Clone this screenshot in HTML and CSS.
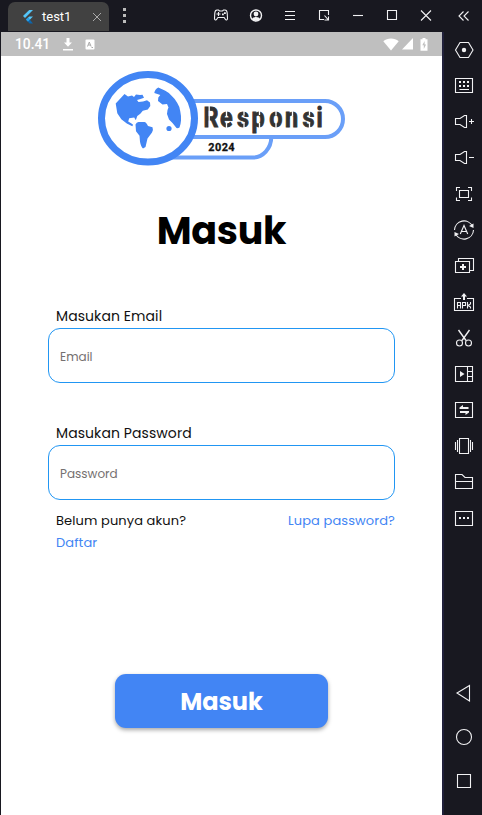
FILE: index.html
```html
<!DOCTYPE html>
<html lang="id">
<head>
<meta charset="utf-8">
<title>test1</title>
<link rel="stylesheet" href="styles.css">
</head>
<body>
<div class="window">
  <header class="titlebar">
    <div class="tab">
      <svg class="flutter" width="12" height="16" viewBox="0 0 12 16"><path d="M7.2 1H11L3 9 1 7z" fill="#54c5f8"/><path d="M7.2 7.5H11L7.8 10.8 6 12.5 4 10.6z" fill="#54c5f8"/><path d="M4 10.6l2-1.9 1.9 2L11 14.5H7.5z" fill="#0d66ad"/><path d="M4 10.6l2-1.9 1.9 1.9-1.9 1.9z" fill="#2aa5ec"/></svg>
      <span class="tab-name">test1</span>
      <svg class="tab-close" width="10" height="10" viewBox="0 0 10 10"><path d="M1 1l8 8M9 1L1 9"/></svg>
    </div>
    <svg class="kebab" width="3" height="16" viewBox="0 0 3 16"><path d="M0 0h3v3H0zM0 6h3v3H0zM0 12h3v3H0z"/></svg>
    <nav class="controls">
      <svg class="icon" viewBox="0 0 24 24"><path d="M7 6h1.500l1 1h3l1-1H15c1.500 0 2 1 2.200 3l.3 5.500c0 1.700-1.500 2-2.200.8l-1.200-1.800H7.900l-1.200 1.800c-.7 1.200-2.200.9-2.200-.8L4.800 9c.2-2 .7-3 2.200-3z"/><path d="M8.500 8v4M6.500 10h4"/><path class="solid" d="M12 9.500h1.800v1.800H12zM14 8.200h1.800V10H14z"/></svg>
      <svg class="icon" viewBox="0 0 24 24"><circle cx="12" cy="11.500" r="5.500" stroke-width="1.400"/><circle class="solid" cx="12" cy="10" r="2.400"/><path class="solid" d="M8 15.300c.5-3 7.500-3 8 0-2 2-6 2-8 0z"/></svg>
      <svg class="icon" viewBox="0 0 24 24"><path d="M7 7.500h10M7 11.500h10M7 15.500h10"/></svg>
      <svg class="icon" viewBox="0 0 24 24"><path d="M12 15.500H7.500v-9h9V11M12.500 11.500l3.500 4M16.500 12.500v3.500h-4"/></svg>
      <svg class="icon" viewBox="0 0 24 24"><path d="M7 11.500h10"/></svg>
      <svg class="icon" viewBox="0 0 24 24"><path d="M7.500 6.500h9v9h-9z"/></svg>
      <svg class="icon" viewBox="0 0 24 24"><path d="M7 6.500l10 10M17 6.500l-10 10"/></svg>
      <svg class="icon collapse" viewBox="0 0 24 24"><path d="M11.500 7.500L7 12l4.500 4.500M16.500 7.500L12 12l4.500 4.500"/></svg>
    </nav>
  </header>

  <main class="phone">
    <div class="statusbar">
      <span class="clock">10.41</span>
      <svg class="download" width="12" height="13" viewBox="0 0 12 13"><path d="M4.500 0h3v4.500H10L6 8.700 2 4.500h2.500zM1 11h10v1.500H1z"/></svg>
      <svg class="letter" width="10" height="11" viewBox="0 0 10 11"><rect x=".5" y=".5" width="9" height="10" rx="1"/><path d="M2.500 7.500L4.300 3l1.800 4.500M3.200 6h2.200M6.500 8.500h1.500" fill="none" stroke="#aaa"/></svg>
      <svg class="wifi" width="16" height="13" viewBox="0 0 16 13"><path d="M.3 3.200C4.500-.5 11.500-.5 15.700 3.200L8 12.500z"/></svg>
      <svg class="signal" width="12" height="12" viewBox="0 0 12 12"><path d="M11 0v11.500H0z"/></svg>
      <svg class="battery" width="8" height="13" viewBox="0 0 8 13"><path d="M2.500 0h3v1.200H7.500v11.600H.5V1.200h2z"/><path d="M4.600 3L2.300 7.300h1.500V11l2.300-4.500H4.600z" fill="#bfbfbf"/></svg>
    </div>

    <div class="page">
      <svg class="logo" width="270" height="112" viewBox="90 62 270 112" role="img">
        <path d="M170 137H271.300A18.500 20.500 0 0 1 252.500 157.600H170z" fill="#fff" stroke="#6a9ff8" stroke-width="4"/>
        <rect x="160" y="101" width="183" height="36" rx="18" fill="#fff" stroke="#6a9ff8" stroke-width="4"/>
        <text class="logo-name" transform="translate(203.500 127) scale(.85 1)" x="0 19.400 39.500 56.500 77.500 96 116.500 133" y="0">Responsi</text>
        <path class="stencil" d="M209.200 105v24M226.500 110v7M226.500 121v8M244 110v5.500M244 122v7M259.500 110v5M259.500 123v6M276 110v5.500M276 122v7M292.500 110v6M309.500 110v5.500M309.500 122v7"/>
        <text class="logo-year" transform="translate(208.300 150.700) scale(.95 1)" x="0" y="0" textLength="27.700" lengthAdjust="spacing">2024</text>
        <ellipse cx="148" cy="118.300" rx="46.500" ry="43.800" fill="#fff" stroke="#4285f4" stroke-width="7"/>
        <g fill="#4285f4">
          <path d="M115.700 103.500L124.500 94l3.500 2.500 4-1 2 1.500 2-2.500 4 .5 2.500-.3 1.500 3-3.500 1.300-3.500 1 1.500 2 4.500-.5 4-1.300 3 2.300.3 3.500-2.500 3.500-5 1.300-2.500 3-3 2.200-1.500 4.200-1.600-2.700-5 .8-1 3.200 3.300 2 1.600 1.300-.8 1.500-5.500-2.800-5.500-4.200-4-6z"/>
          <path d="M135.500 124.500q1-2.500 3-2.500h6q1.500 0 3.500 4l4.500 1.300q1 2.200-.5 5.200l-4.500 6-2 8.500-2.500 1.500q-2-1.500-3-6.800l-.5-6-3.500-4.500z"/>
          <path d="M154.300 93q.5-4 4-5.500l7 3.300q4 2 6.500 5.200 3.500 3 5.500 7 2.700 4 3 8.500 1 4.500.7 9-.3 4-1.500 7-1.500 1-3 .5l-4-5-3.500-3.500-2-5.500q0-4 1.500-6.500l-1.500-3.500-4.500.5-4.500-3.500.3-3.500 2-2.500z"/>
          <circle cx="169" cy="128.500" r="2.600"/>
        </g>
      </svg>

      <h1 class="title">Masuk</h1>

      <form class="form">
        <label class="label" for="email">Masukan Email</label>
        <input class="field email" id="email" type="text" placeholder="Email">
        <label class="label second" for="password">Masukan Password</label>
        <input class="field pass" id="password" type="password" placeholder="Password">
        <div class="links">
          <div class="register"><span class="ask">Belum punya akun?</span><a class="daftar">Daftar</a></div>
          <a class="forgot">Lupa password?</a>
        </div>
        <button class="submit" type="button">Masuk</button>
      </form>
    </div>
  </main>

  <aside class="sidebar">
    <div class="tools">
      <svg class="icon" viewBox="0 0 24 24"><path d="M3.500 12L8 4.500h8.500L21 12l-4.500 7.500H8z"/><circle class="solid" cx="12" cy="12" r="2.200"/></svg>
      <svg class="icon" viewBox="0 0 24 24"><path d="M3.500 4.500h17v14h-17zM7.500 15.500h9.500"/><path class="solid" d="M7 7h2v2H7zM11 7h2v2h-2zM15 7h2v2h-2zM7 11h2v2H7zM11 11h2v2h-2zM15 11h2v2h-2z"/></svg>
      <svg class="icon" viewBox="0 0 24 24"><path d="M3.500 8.500H8l4.500-3h2v12h-2L8 14.500H3.500zM17 11.500h5M19.500 9v5"/></svg>
      <svg class="icon" viewBox="0 0 24 24"><path d="M3.500 8.500H8l4.500-3h2v12h-2L8 14.500H3.500zM17 11.500h5"/></svg>
      <svg class="icon" viewBox="0 0 24 24"><path d="M4.500 9V5.500H8M16 5.500h3.500V9M4.500 15.500v3H8M16 18.500h3.500v-3M7.500 8.500h9v7h-9z"/></svg>
      <svg class="icon" viewBox="0 0 24 24"><path d="M2.500 12A9.500 9.500 0 0 1 20.500 8.200M21.500 12A9.500 9.500 0 0 1 3.500 15.800M8.300 16L12 7.500l3.700 8.500M9.500 13.500h5"/><path class="solid" d="M21.500 5.500v4.500l-4.500-2zM2.500 18.500V14L7 16z"/></svg>
      <svg class="icon" viewBox="0 0 24 24"><path d="M3.500 7.500h14v11h-14zM6.500 7V4.500h15v12H18"/><path d="M11 10v6M8 13h6" stroke-width="2"/></svg>
      <svg class="icon" viewBox="0 0 24 24"><path d="M9 8.500H2.500v12h19v-12H15"/><path d="M12 5v5" stroke-width="2"/><path class="solid" d="M9 6.500l3-3.500 3 3.500z"/><path d="M5.500 18.500v-6h3v6M5.500 15.500h3M10.500 18.500v-6h3v3h-3M15.500 12v6.500M18.500 12v2l-2.500 1.500 2.500 1.500v1.500"/></svg>
      <svg class="icon" viewBox="0 0 24 24"><path d="M6.500 4l7.500 10.500M17.500 4L10 14.500" stroke-width="1.400"/><circle cx="7.500" cy="17" r="3"/><circle cx="16.500" cy="17" r="3"/></svg>
      <svg class="icon" viewBox="0 0 24 24"><path d="M3.500 4.500h17v15h-17zM15.500 4.500v15M15.500 9.500h5M15.500 14.500h5"/><path class="solid" d="M8 9l4.500 3L8 15z"/></svg>
      <svg class="icon" viewBox="0 0 24 24"><path d="M3.500 4.500h17v15h-17z"/><path class="solid" d="M7.500 9.500L11 7v2h5.500v2h-9zM17 14.500L13.500 17v-2H8v-2h9z"/></svg>
      <svg class="icon" viewBox="0 0 24 24"><path d="M7.500 4.500h9v15h-9zM5.500 6v12M3.500 8v8M18.500 6v12M20.500 8v8"/></svg>
      <svg class="icon" viewBox="0 0 24 24"><path d="M3.500 18.500v-14H10l3 3h7.500v11zM3.500 11.500h17"/></svg>
      <svg class="icon" viewBox="0 0 24 24"><path d="M3.500 5.500h17v14h-17z"/><path class="solid" d="M7 11h2v2H7zM11 11h2v2h-2zM15 11h2v2h-2z"/></svg>
    </div>
    <div class="keys">
      <svg class="icon" viewBox="0 0 24 24"><path d="M17.500 4.500v15.500L5 12z"/></svg>
      <svg class="icon" viewBox="0 0 24 24"><circle cx="12" cy="12" r="7.500"/></svg>
      <svg class="icon" viewBox="0 0 24 24"><path d="M5.500 5.500h13v13h-13z"/></svg>
    </div>
  </aside>
</div>
</body>
</html>
```
FILE: styles.css
```css
* { box-sizing: border-box; }

body {
  margin: 0;
  background: #181820;
  font-family: Poppins, Inter, sans-serif;
}

.window {
  display: grid;
  grid-template: 32px 783px / 442px 40px;
  width: 482px;
  height: 815px;
  overflow: hidden;
}

.titlebar {
  grid-column: 1 / 3;
  display: flex;
  align-items: flex-start;
  padding-left: 8px;
}

.tab {
  display: flex;
  align-items: center;
  width: 101px;
  height: 29px;
  margin-top: 2px;
  padding-left: 14px;
  border-radius: 7px 7px 0 0;
  background: #414141;
  color: #fff;
  font: 13px Roboto, sans-serif;
}

.tab-name { width: 50px; margin-left: 8px; }
.tab-close { fill: none; stroke: #aaa; }
.kebab { margin: 8px 0 0 14px; fill: #bbb; }

.controls {
  display: flex;
  gap: 10px;
  margin: 4px 0 0 84px;
}

.icon {
  display: block;
  flex: none;
  width: 24px;
  height: 24px;
  fill: none;
  stroke: #f1f1f3;
  stroke-width: 1.1;
}

.solid { fill: #f1f1f3; stroke: none; }
.collapse { margin-left: 4px; }

.phone {
  margin-left: 1px;
  background: #fff;
}

.statusbar {
  display: flex;
  align-items: center;
  height: 24px;
  padding: 0 14px;
  background: #bfbfbf;
  color: #fff;
  fill: #fff;
  font: 500 13.800px Roboto, sans-serif;
}

.clock { width: 35px; }
.download { margin-left: 12px; }
.letter { margin-left: 11px; }
.wifi { margin-left: auto; }
.signal { margin-left: 3px; }
.battery { margin-left: 6px; }

.page { padding: 6px 47px 0; }
.logo { display: block; margin-left: 42px; }
.logo-name { font: 700 27.500px Roboto, sans-serif; fill: #333; stroke: #333; stroke-width: .9; }
.logo-year { font: 700 11.500px Roboto, sans-serif; fill: #111; stroke: #111; stroke-width: .3; }
.stencil { fill: none; stroke: #fff; stroke-width: 1.300; }

.title {
  margin: 33px 0 0;
  color: #000;
  font-size: 38px;
  font-weight: 700;
  line-height: 48px;
  letter-spacing: -.3px;
  text-align: center;
}

.form { margin-top: 50px; }

.label {
  display: block;
  height: 23px;
  padding-left: 8px;
  color: #111;
  font-size: 14px;
  line-height: 23px;
  letter-spacing: .08px;
}

.second { margin-top: 39px; }

.field {
  display: block;
  width: 347px;
  height: 55px;
  padding: 2px 11px 0;
  border: 1px solid #2196f3;
  border-radius: 12px;
  outline: none;
  background: #fff;
  font: inherit;
  font-size: 12px;
}

.field::placeholder { color: #757070; opacity: 1; }

.links {
  display: flex;
  justify-content: space-between;
  margin-top: 10px;
  padding-left: 8px;
  width: 347px;
  color: #111;
  font-size: 13px;
  line-height: 22px;
  letter-spacing: .1px;
}

.register { display: flex; flex-direction: column; }
.forgot, .daftar { color: #4285f4; }

.submit {
  display: block;
  width: 213px;
  height: 54px;
  margin: 120px 0 0 67px;
  padding: 0;
  border: 0;
  border-radius: 11px;
  background: #4285f4;
  box-shadow: 0 2px 4px rgba(0, 0, 0, .35);
  color: #fff;
  font: inherit;
  font-size: 24px;
  font-weight: 700;
}

.sidebar {
  display: flex;
  flex-direction: column;
  justify-content: space-between;
  padding: 6px 0 22px 8px;
  border-left: 2px solid #20203a;
}

.tools { display: grid; gap: 12px; }
.keys { display: grid; gap: 20px; }
```
